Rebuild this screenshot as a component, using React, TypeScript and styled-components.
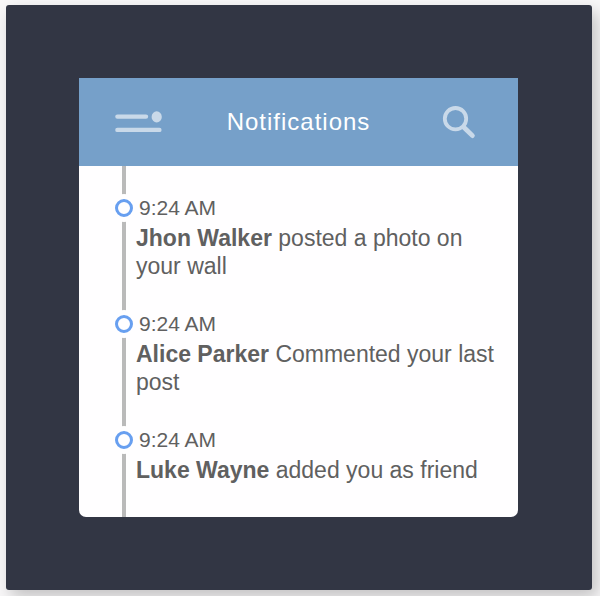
import React from "react";
import styled, { createGlobalStyle } from "styled-components";

const GlobalStyle = createGlobalStyle`
  *, *::before, *::after { box-sizing: border-box; }
  body {
    margin: 0;
    background: #f8f7f8;
    font-family: "Liberation Sans", Arial, sans-serif;
  }
`;

const Page = styled.div`
  display: grid;
  min-height: 100vh;
  padding: 5px 8px 6px 6px;
`;

const Stage = styled.main`
  display: flex;
  align-items: center;
  padding: 73px 74px 73px 73px;
  background: #323644;
  border-radius: 3px;
  box-shadow: 5px 7px 16px rgba(0, 0, 0, 0.22);
`;

const Card = styled.section`
  flex: 1;
  min-width: 0;
  overflow: hidden;
  background: #fffeff;
  border-radius: 0 0 7px 7px;
`;

const Header = styled.header`
  display: grid;
  grid-template-columns: 1fr auto 1fr;
  align-items: center;
  height: 88px;
  padding: 0 36px;
  background: #76a0c9;
`;

const Title = styled.h1`
  margin: 0;
  color: #fff;
  font-size: 24px;
  font-weight: 400;
  line-height: 28px;
  letter-spacing: 1px;
`;

const IconButton = styled.button<{ $side: "start" | "end" }>`
  display: flex;
  justify-self: ${(p) => p.$side};
  padding: ${(p) => (p.$side === "end" ? "0 6px 0 0" : "0")};
  border: 0;
  background: none;
  color: #c9d9e9;
  cursor: pointer;
`;

const Timeline = styled.ul`
  position: relative;
  display: grid;
  gap: 29px;
  margin: 0;
  padding: 27px 12px 33px 36px;
  list-style: none;

  &::before {
    content: "";
    position: absolute;
    top: 0;
    bottom: 0;
    left: 43px;
    width: 4px;
    background: #bababa;
  }
`;

const Item = styled.li`
  position: relative;
  color: #606060;
`;

const TimeRow = styled.div`
  display: flex;
  align-items: center;
  gap: 6px;
  height: 30px;
`;

const Marker = styled.span`
  width: 18px;
  height: 18px;
  border: 3px solid #689ff0;
  border-radius: 50%;
  background: #fffeff;
  box-shadow: 0 0 0 5px #fffeff;
`;

const Time = styled.time`
  font-size: 21px;
  line-height: 28px;
`;

const Message = styled.p`
  margin: 0;
  padding: 1px 0 0 21px;
  font-size: 23px;
  line-height: 28px;
`;

const items = [
  { name: "Jhon Walker", text: "posted a photo on your wall" },
  { name: "Alice Parker", text: "Commented your last post" },
  { name: "Luke Wayne", text: "added you as friend" },
];

export default function App() {
  return (
    <>
      <GlobalStyle />
      <Page>
        <Stage>
          <Card>
            <Header>
              <IconButton type="button" aria-label="Menu" $side="start">
                <svg width="48" height="24" viewBox="0 0 48 24" fill="none" stroke="currentColor" strokeWidth="4.4" strokeLinecap="round" aria-hidden="true">
                  <path d="M2.4 6.6H31M2.4 19.9H44.4" />
                  <ellipse cx="41.7" cy="6.9" rx="5.1" ry="5.6" fill="currentColor" stroke="none" />
                </svg>
              </IconButton>
              <Title>Notifications</Title>
              <IconButton type="button" aria-label="Search" $side="end">
                <svg width="34" height="34" viewBox="0 0 34 34" fill="none" stroke="currentColor" aria-hidden="true">
                  <circle cx="13.5" cy="13.7" r="10.7" strokeWidth="3.8" />
                  <path d="M21.8 22.2L30.4 30.6" strokeWidth="4.8" strokeLinecap="round" />
                </svg>
              </IconButton>
            </Header>
            <Timeline>
              {items.map((item) => (
                <Item key={item.name}>
                  <TimeRow>
                    <Marker />
                    <Time dateTime="09:24">9:24 AM</Time>
                  </TimeRow>
                  <Message>
                    <strong>{item.name}</strong> {item.text}
                  </Message>
                </Item>
              ))}
            </Timeline>
          </Card>
        </Stage>
      </Page>
    </>
  );
}
